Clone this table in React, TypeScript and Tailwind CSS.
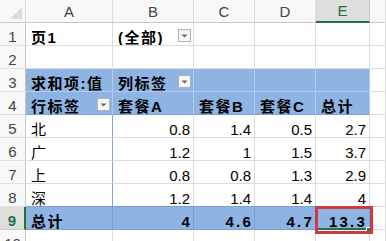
import React from "react";

const base =
  "flex items-end overflow-hidden whitespace-nowrap border-r border-b leading-[15px] text-[15px]";

function Drop() {
  return (
    <div className="ml-auto mb-[3px] mr-[2px] flex h-[13px] w-[13px] shrink-0 items-center justify-center border border-[#b3b3b3] bg-[#f7f7f7]">
      <svg width="7" height="4" viewBox="0 0 7 4">
        <polygon points="0.5,0.5 6.5,0.5 3.5,3.5" fill="#666" />
      </svg>
    </div>
  );
}

function C({
  children,
  className = "",
}: {
  children?: React.ReactNode;
  className?: string;
}) {
  return <div className={`${base} ${className}`}>{children}</div>;
}

const W = "bg-white border-[#dcdcdc]";
const BL = "bg-[#8eb4e3] border-[#b3cbec]";
const BLB = "bg-[#8eb4e3] border-r-[#b3cbec] border-b-[#7fa3d3]";
const B9 = "bg-[#8eb4e3] border-r-[#7a9fd0] border-b-[#7a9fd0]";
const RH =
  "justify-center pb-[1px] bg-[#f8f8f8] border-r-[#c8c8c8] border-b-[#e2e2e2] text-[#444]";
const CH =
  "justify-center pb-[3px] bg-[#f8f8f8] border-r-[#dcdcdc] border-b-[#c8c8c8] text-[#444]";
const L = "pl-[5px]";
const R = "justify-end pr-[3px]";
const bold = "font-bold tracking-[1.5px]";
const numBold = "justify-end pr-[1px] font-bold tracking-[2.2px]";

const data: [string, string, string, string, string][] = [
  ["北", "0.8", "1.4", "0.5", "2.7"],
  ["广", "1.2", "1", "1.5", "3.7"],
  ["上", "0.8", "0.8", "1.3", "2.9"],
  ["深", "1.2", "1.4", "1.4", "4"],
];

export default function App() {
  return (
    <div className="relative h-[241px] w-[386px] overflow-hidden bg-white font-['Liberation_Sans','Noto_Sans_CJK_SC',sans-serif] text-black">
      <div className="grid grid-cols-[26px_87px_81px_61px_61px_54px_16px] auto-rows-[23px]">
        {/* header row */}
        <C className={`${CH} border-r-[#c8c8c8]`}>
          <svg width="26" height="23" className="shrink-0 self-start" viewBox="0 0 26 23">
            <polygon points="22,7 22,19 10,19" fill="#dadada" />
          </svg>
        </C>
        <C className={CH}>A</C>
        <C className={CH}>B</C>
        <C className={CH}>C</C>
        <C className={CH}>D</C>
        <C className="justify-center pb-[3px] bg-[#dedede] border-r-[#c8c8c8] border-b-2 border-b-[#217346] text-[#217346]">
          E
        </C>
        <C className={CH}></C>

        {/* row 1 */}
        <C className={RH}>1</C>
        <C className={`${W} ${L} ${bold}`}>页1</C>
        <C className={`${W} ${L} ${bold}`}>
          <span>(全部)</span>
          <Drop />
        </C>
        <C className={W}></C>
        <C className={W}></C>
        <C className={W}></C>
        <C className={W}></C>

        {/* row 2 */}
        <C className={RH}>2</C>
        <C className={W}></C>
        <C className={W}></C>
        <C className={W}></C>
        <C className={W}></C>
        <C className={W}></C>
        <C className={W}></C>

        {/* row 3 */}
        <C className={RH}>3</C>
        <C className={`${BL} ${L} ${bold}`}>求和项:值</C>
        <C className={`${BL} ${L} ${bold}`}>
          <span>列标签</span>
          <Drop />
        </C>
        <C className={BL}></C>
        <C className={BL}></C>
        <C className={BL}></C>
        <C className={W}></C>

        {/* row 4 */}
        <C className={RH}>4</C>
        <C className={`${BLB} ${L} ${bold}`}>
          <span>行标签</span>
          <Drop />
        </C>
        <C className={`${BLB} ${L} ${bold}`}>套餐A</C>
        <C className={`${BLB} ${L} ${bold}`}>套餐B</C>
        <C className={`${BLB} ${L} ${bold}`}>套餐C</C>
        <C className={`${BLB} ${L} ${bold}`}>总计</C>
        <C className={W}></C>

        {/* rows 5-8 */}
        {data.map((r, i) => (
          <React.Fragment key={i}>
            <C className={RH}>{5 + i}</C>
            <C className={`bg-white border-r-[#86a6cf] border-b-[#dcdcdc] ${L}`}>
              {r[0]}
            </C>
            <C className={`${W} ${R}`}>{r[1]}</C>
            <C className={`${W} ${R}`}>{r[2]}</C>
            <C className={`${W} ${R}`}>{r[3]}</C>
            <C className={`${W} ${R}`}>{r[4]}</C>
            <C className={W}></C>
          </React.Fragment>
        ))}

        {/* row 9 */}
        <C className="justify-center pb-[1px] bg-[#dedede] border-r-2 border-r-[#217346] border-b-[#c8c8c8] font-bold text-[#217346]">
          9
        </C>
        <C className={`${B9} ${L} ${bold}`}>总计</C>
        <C className={`${B9} ${numBold}`}>4</C>
        <C className={`${B9} ${numBold}`}>4.6</C>
        <C className={`${B9} ${numBold}`}>4.7</C>
        <C className={`${B9} ${numBold} pr-[2px]`}>13.3</C>
        <C className={W}></C>

        {/* row 10 */}
        <C className={RH}>10</C>
        <C className={W}></C>
        <C className={W}></C>
        <C className={W}></C>
        <C className={W}></C>
        <C className={W}></C>
        <C className={W}></C>
      </div>

      {/* selection: green bottom edge + handle */}
      <div className="absolute left-[318px] top-[228px] h-[2px] w-[52px] bg-[#217346]" />
      <div className="absolute left-[366px] top-[227px] h-[5px] w-[5px] border border-white bg-[#217346]" />
      {/* red annotation rectangle */}
      <div className="absolute left-[315px] top-[206px] h-[28px] w-[58px] border-[3px] border-[#cf3b3b]" />
      {/* top border of row 9 */}
      <div className="pointer-events-none absolute left-[26px] top-[206px] h-px w-[289px] bg-[#7a9fd0]" />
    </div>
  );
}
